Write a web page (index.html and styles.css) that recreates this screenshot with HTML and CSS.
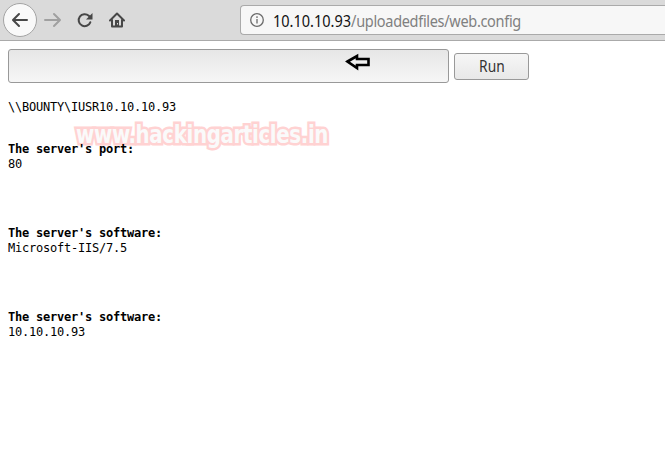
FILE: index.html
```
<!DOCTYPE html>
<html lang="en">
<head>
    <meta charset="UTF-8">
    <title>web.config</title>
    <link rel="stylesheet" href="styles.css">
</head>
<body>

<div class="toolbar">
    <button class="nav-button back" aria-label="Back">
        <svg width="18" height="16" viewBox="0 0 18 16"><path d="M8 2 2 8l6 6M2.500 8H16"/></svg>
    </button>
    <button class="nav-button forward" aria-label="Forward">
        <svg width="18" height="16" viewBox="0 0 18 16"><path d="m10 2 6 6-6 6M15.500 8H1"/></svg>
    </button>
    <button class="nav-button reload" aria-label="Reload">
        <svg width="16" height="16" viewBox="0 0 16 16"><path d="M13.300 10.300A6 6 0 1 1 11.800 3.800L13.500 5.500"/><path class="solid" d="M15.500 1v6.500H9z"/></svg>
    </button>
    <button class="nav-button home" aria-label="Home">
        <svg width="16" height="16" viewBox="0 0 16 16"><path d="M1 8.500 8 1.500l7 7M3 8v6.500h10V8"/><path class="solid" d="M6 8h4v6.500H6z"/><path class="knob" d="M8 11h1v1.500H8z"/></svg>
    </button>
    <div class="url-bar">
        <svg class="info" width="14" height="14" viewBox="0 0 14 14"><circle cx="7" cy="7" r="6.300"/><path d="M7 6v4.500M7 3.300v1.700"/></svg>
        <div class="url"><span class="host">10.10.10.93</span><span class="path">/uploadedfiles/web.config</span></div>
    </div>
</div>

<div class="page">
    <form class="command-form">
        <div class="command">
            <input type="text" class="command-input" aria-label="Command">
            <svg class="arrow" width="26" height="18" viewBox="0 0 26 18"><path d="M2.500 8.500 12 3v3h11.500v6H12v3z"/></svg>
        </div>
        <button type="button" class="run-button"><span>Run</span></button>
    </form>

    <div class="output">
        <div class="watermark">www.hackingarticles.in</div>
        <div class="user">\\BOUNTY\IUSR10.10.10.93</div>
        <div class="entry">
            <b>The server's port:</b>
            <p>80</p>
        </div>
        <div class="entry">
            <b>The server's software:</b>
            <p>Microsoft-IIS/7.5</p>
        </div>
        <div class="entry">
            <b>The server's software:</b>
            <p>10.10.10.93</p>
        </div>
    </div>
</div>

</body>
</html>
```

FILE: styles.css
```
body {
    margin: 0;
    height: 453px;
    overflow: hidden;
    background-color: #fff;
    color: #000;
}

.toolbar {
    display: flex;
    align-items: center;
    box-sizing: border-box;
    height: 41px;
    padding-left: 3px;
    background-color: #dadada;
    border-bottom: 1px solid #aaa;
}

.nav-button {
    display: flex;
    align-items: center;
    justify-content: center;
    box-sizing: border-box;
    flex: none;
    width: 32px;
    height: 34px;
    padding: 0;
    border: none;
    background: none;
}

.nav-button svg {
    fill: none;
    stroke: #474747;
    stroke-width: 2;
    stroke-linecap: round;
    stroke-linejoin: round;
}

.nav-button .solid {
    fill: #474747;
    stroke: none;
}

.nav-button .knob {
    fill: #dadada;
    stroke: none;
}

.nav-button.back {
    width: 34px;
    border: 1px solid #a3a3a3;
    border-radius: 50%;
    background-color: #f9f9f9;
}

.nav-button.forward svg {
    stroke: #a0a0a0;
}

.url-bar {
    display: flex;
    align-items: center;
    box-sizing: border-box;
    flex: 1;
    height: 30px;
    margin-left: 107px;
    padding-left: 9px;
    background-color: #f7f7f7;
    border: 1px solid #aaa;
    border-right: none;
    border-radius: 4px 0 0 4px;
    font-family: "Noto Sans", sans-serif;
    font-size: 16px;
    white-space: nowrap;
}

.info {
    margin-right: 9px;
    fill: none;
    stroke: #6b6b6b;
    stroke-width: 1.3;
}

.url {
    margin-top: 1px;
    transform: scaleX(0.907);
    transform-origin: left;
}

.host {
    color: #111;
}

.path {
    color: #808080;
    letter-spacing: -0.35px;
}

.page {
    padding: 8px;
}

.command-form {
    display: flex;
    align-items: center;
    gap: 5px;
}

.command {
    position: relative;
    width: 441px;
    height: 34px;
}

.command-input {
    box-sizing: border-box;
    width: 100%;
    height: 100%;
    border: 1px solid #999;
    border-radius: 3px;
    background: linear-gradient(#e6e6e6, #f6f6f6);
}

.arrow {
    position: absolute;
    left: 337px;
    top: 4px;
    fill: #f0f0f0;
    stroke: #000;
    stroke-width: 2.6;
}

.run-button {
    width: 75px;
    height: 27px;
    padding: 0;
    border: 1px solid #999;
    border-radius: 3px;
    background: linear-gradient(#f6f6f6, #e8e8e8);
    color: #333;
    font-family: "Noto Sans", sans-serif;
    font-size: 16px;
}

.run-button span {
    display: inline-block;
    transform: scaleX(0.86);
}

.output {
    position: relative;
    margin-top: 17px;
    font-family: "DejaVu Sans Mono", monospace;
    font-size: 12px;
    line-height: 14px;
    letter-spacing: -0.224px;
}

.user {
    margin-bottom: 28px;
}

.entry {
    position: relative;
    height: 84px;
}

.entry b {
    display: block;
}

.entry p {
    margin: 1px 0 0;
}

.watermark {
    position: absolute;
    left: 68px;
    top: 19px;
    color: #fafafa;
    font-family: "DejaVu Sans Condensed", "DejaVu Sans", sans-serif;
    font-size: 24px;
    font-weight: bold;
    font-stretch: condensed;
    line-height: 32px;
    letter-spacing: -0.4px;
    white-space: nowrap;
    -webkit-text-stroke: 5px #ffd2d2;
    paint-order: stroke fill;
    transform: scaleX(0.918);
    transform-origin: left;
}
```
